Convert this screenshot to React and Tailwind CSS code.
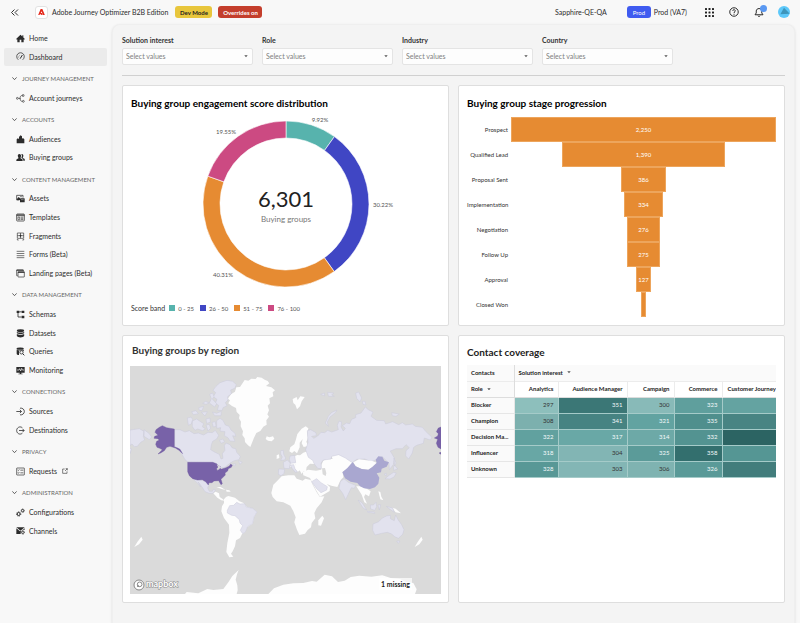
import React, { useState } from 'react'

const INK = '#2c2c2c'

// Sidebar icons, all on a 27 x 27 grid
const icons = {
  home: <path d="M13.5 2 1 14.500V16.500H4V25H11V17.500H16V25H23V16.500H26V14.500L22 10.500V4H19V7.500Z" fill={INK} />,
  dashboard: (
    <g fill="none" stroke={INK} strokeWidth="2.200" strokeLinecap="round">
      <path d="M6 22.500A11.500 11.500 0 1 1 21 22.500" />
      <path d="M13 19 18.500 10" strokeWidth="3" />
      <path d="M7 15H7.500M9.500 10 10 10.500" strokeWidth="1.500" />
    </g>
  ),
  journeys: (
    <g fill="none" stroke={INK} strokeWidth="1.900">
      <circle cx="4" cy="13" r="2.800" />
      <circle cx="12" cy="13" r="1.400" />
      <path d="M7 13H11M12.500 11C13 6 15 4.500 19 4.500M12.500 15C13 20 15 22 19 22" />
      <rect x="19" y="2" width="5" height="5" rx="1" />
      <circle cx="22" cy="22" r="2.800" />
    </g>
  ),
  audiences: (
    <path d="M9 25V6L13.500 1 18 4V25ZM2 25V13L5.500 10 9 12V25ZM18 25V11L21 9 25 13V25Z" fill={INK} />
  ),
  people: (
    <g fill={INK}>
      <path d="M10 3C14 3 15.500 6 15 9.500 14.700 12 13.500 13.500 13.500 15.500L19 18.500C20 19.500 20 22 20 24H1C1 21.500 1 19.500 2 18.500L7.500 15.500C7.500 13.500 6 12 5.500 9.500 5 6 6.500 3 10 3Z" />
      <path d="M17 3C21 2.500 22.500 6 22 9 21.500 12 20.500 13 20.500 15L25 17.500C26.500 18.500 26.500 21 26.500 23H22C22 20 21.500 18 20 17L16 14.500C18 11 18.500 6 16 3.500Z" />
    </g>
  ),
  assets: (
    <g>
      <path d="M2 4H21V11M2 4V18H10" fill="none" stroke={INK} strokeWidth="2.200" />
      <path d="M3 14 8 9 12 13V18H3Z" fill={INK} />
      <circle cx="15" cy="8" r="1.800" fill={INK} />
      <rect x="12" y="13" width="14" height="12" rx="1" fill={INK} />
      <path d="M15 17H23" stroke="#ddd" strokeWidth="1.400" />
    </g>
  ),
  templates: (
    <g fill="none" stroke={INK} strokeWidth="2.200">
      <rect x="2" y="3" width="23" height="21" rx="2" />
      <path d="M2 8H25M2 5.500H25" />
      <path d="M6 12H11V20H6ZM14 12.500H22M14 16H22M14 19.500H22" strokeWidth="1.800" />
    </g>
  ),
  fragments: (
    <g fill="none" stroke={INK} strokeWidth="1.900">
      <path d="M4 3H23V19H4ZM4 11H23M13.500 3V19" />
      <path d="M4 21V24H8M19 24H23V21" />
      <circle cx="13.500" cy="11" r="2" fill={INK} />
    </g>
  ),
  forms: <path d="M2 4H25M2 10.500H25M2 17H25M2 23H25" stroke={INK} strokeWidth="1.900" />,
  landing: (
    <g fill="none" stroke={INK} strokeWidth="2">
      <path d="M5 20H2V3H22V6" />
      <path d="M2 3.500H22" strokeWidth="3" />
      <rect x="6" y="8" width="19" height="16" rx="1" />
      <path d="M6 10H25" strokeWidth="3" />
    </g>
  ),
  schemas: (
    <g fill={INK}>
      <path d="M2 2H10V9H2ZM17 2H25V9H17ZM17 17H25V25H17Z" />
      <path d="M10 5.500H17M6 9V21H17" fill="none" stroke={INK} strokeWidth="2.500" />
    </g>
  ),
  datasets: (
    <g fill={INK}>
      <ellipse cx="13.500" cy="5" rx="11" ry="4" />
      <path d="M2.500 8C6 11.500 21 11.500 24.500 8V12C22 16 5 16 2.500 12ZM2.500 15C6 18 21 18 24.500 15V21C22 26.500 5 26.500 2.500 21Z" />
    </g>
  ),
  queries: (
    <g fill={INK}>
      <ellipse cx="12.500" cy="5" rx="11" ry="3.500" />
      <path d="M2 8C6 10.500 20 10.500 24 8V11H9V24C5 24 2 22 2 20Z" />
      <circle cx="16.500" cy="16" r="5" fill="#f8f8f8" stroke={INK} strokeWidth="2.500" />
      <path d="M20 20 25 25" stroke={INK} strokeWidth="3" />
    </g>
  ),
  monitoring: (
    <g>
      <path d="M1 3H26V20H16V23H20V25H7V23H11V20H1Z" fill={INK} />
      <path d="M3 12H9L11 8 14 15 17 7 19 12H24" fill="none" stroke="#fff" strokeWidth="1.900" />
    </g>
  ),
  sources: (
    <g fill="none" stroke={INK} strokeWidth="2.400">
      <path d="M12 3.500C20 2 25 8 25 13.500S20 25 12 23.500" />
      <path d="M1 13.500H16M11.500 8.500 16.500 13.500 11.500 18.500" />
    </g>
  ),
  destinations: (
    <g fill="none" stroke={INK} strokeWidth="2.400">
      <path d="M19 5C10 -1 2 6 2 13.500S10 28 19 22" />
      <path d="M9 13.500H24M19.500 8.500 24.500 13.500 19.500 18.500" />
    </g>
  ),
  requests: (
    <g fill="none" stroke={INK} strokeWidth="2">
      <rect x="2" y="3" width="23" height="21" rx="1" />
      <path d="M5 9 7 11 10 7M5 17 7 19 10 15M13 9.500H22M13 17.500H22" />
    </g>
  ),
  configurations: (
    <g fill="none" stroke={INK}>
      <circle cx="8" cy="18" r="4.500" strokeWidth="3" />
      <circle cx="8" cy="18" r="6.500" strokeWidth="2.500" strokeDasharray="2.600 2.500" />
      <circle cx="20" cy="8" r="3.500" strokeWidth="2.500" />
      <circle cx="20" cy="8" r="5" strokeWidth="2.500" strokeDasharray="2 1.930" />
    </g>
  ),
  channels: (
    <g>
      <path d="M1 4H26L13.500 14Z" fill={INK} />
      <path d="M1 7 12 16 15 15 26 7V12C20 10 13 14 14 24H1Z" fill={INK} />
      <circle cx="20.500" cy="19" r="3.500" fill="none" stroke={INK} strokeWidth="2.500" />
      <circle cx="20.500" cy="19" r="5.500" fill="none" stroke={INK} strokeWidth="2" strokeDasharray="2.200 2.120" />
    </g>
  ),
}

const navGroups = [
  { items: [{ label: 'Home', icon: 'home' }, { label: 'Dashboard', icon: 'dashboard', active: true }] },
  { title: 'JOURNEY MANAGEMENT', items: [{ label: 'Account journeys', icon: 'journeys' }] },
  { title: 'ACCOUNTS', items: [{ label: 'Audiences', icon: 'audiences' }, { label: 'Buying groups', icon: 'people' }] },
  {
    title: 'CONTENT MANAGEMENT',
    items: [
      { label: 'Assets', icon: 'assets' },
      { label: 'Templates', icon: 'templates' },
      { label: 'Fragments', icon: 'fragments' },
      { label: 'Forms (Beta)', icon: 'forms' },
      { label: 'Landing pages (Beta)', icon: 'landing' },
    ],
  },
  {
    title: 'DATA MANAGEMENT',
    items: [
      { label: 'Schemas', icon: 'schemas' },
      { label: 'Datasets', icon: 'datasets' },
      { label: 'Queries', icon: 'queries' },
      { label: 'Monitoring', icon: 'monitoring' },
    ],
  },
  { title: 'CONNECTIONS', items: [{ label: 'Sources', icon: 'sources' }, { label: 'Destinations', icon: 'destinations' }] },
  { title: 'PRIVACY', items: [{ label: 'Requests', icon: 'requests', external: true }] },
  { title: 'ADMINISTRATION', items: [{ label: 'Configurations', icon: 'configurations' }, { label: 'Channels', icon: 'channels' }] },
]

const filters = ['Solution interest', 'Role', 'Industry', 'Country']

const bands = [
  { label: '0 - 25', pct: 9.92, color: '#57b3ad', x: 144, y: 7 },
  { label: '26 - 50', pct: 30.22, color: '#4046c4', x: 207, y: 92 },
  { label: '51 - 75', pct: 40.31, color: '#e68b32', x: 47, y: 162 },
  { label: '76 - 100', pct: 19.55, color: '#cc4a82', x: 50, y: 19 },
]

const stages = [
  { label: 'Prospect', value: 2250 },
  { label: 'Qualified Lead', value: 1390 },
  { label: 'Proposal Sent', value: 386 },
  { label: 'Implementation', value: 334 },
  { label: 'Negotiation', value: 276 },
  { label: 'Follow Up', value: 275 },
  { label: 'Approval', value: 127 },
  { label: 'Closed Won', value: 42, hideValue: true },
]

const coverage = [
  { role: 'Blocker', cells: [['297', '#8dbfbc'], ['351', '#3b7776'], ['300', '#88bab8'], ['323', '#5f9f9d'], ['', '#64a3a1']] },
  { role: 'Champion', cells: [['308', '#7cb0ae'], ['341', '#468382'], ['321', '#62a3a1'], ['335', '#4f8f8d'], ['', '#488483']] },
  { role: 'Decision Ma...', cells: [['322', '#61a19f'], ['317', '#69a8a6'], ['314', '#6da9a7'], ['332', '#539391'], ['', '#2c6463']] },
  { role: 'Influencer', cells: [['318', '#68a7a5'], ['304', '#82b5b4'], ['325', '#5b9b99'], ['358', '#336f6e'], ['', '#559694']] },
  { role: 'Unknown', cells: [['328', '#589896'], ['303', '#83b6b5'], ['306', '#7fb3b1'], ['326', '#5a9a98'], ['', '#427d7c']] },
]

const Caret = ({ className }) => (
  <svg viewBox="0 0 6 4" className={className} aria-hidden="true">
    <path d="M0.500 0.500H5.500L3 3.500Z" fill="#555" />
  </svg>
)

const TopBar = () => (
  <header className="flex h-6 items-center pr-[10px] pl-[10px] text-[7px]">
    <button aria-label="Collapse menu" className="flex h-3 w-[9px] items-center">
      <svg viewBox="0 0 9 9" className="size-[9px]" fill="none" stroke="#333" strokeWidth="1">
        <path d="M4.500 1.500 1.500 4.500 4.500 7.500M8 1.500 5 4.500 8 7.500" />
      </svg>
    </button>
    <span className="ml-4 flex size-[13px] items-center justify-center rounded-[3px] border border-[#e2e2e2] bg-white">
      <svg viewBox="0 0 12 11" className="w-[7px]" fill="#e4281a">
        <path d="M4.500 0H7.500L12 11H9L6 3.800 4.700 7H6.900L8.100 11H5.800L5.200 9H3L2.500 11H0Z" />
      </svg>
    </span>
    <span className="ml-1 text-[#2c2c2c]">Adobe Journey Optimizer B2B Edition</span>
    <span className="ml-[7px] flex h-3 w-[37px] items-center justify-center rounded-[3px] bg-[#e8c63c] text-[6px] font-bold text-[#222]">Dev Mode</span>
    <span className="ml-[6px] flex h-3 w-11 items-center justify-center rounded-[3px] bg-[#c43e2c] text-[6px] font-bold text-white">Overrides on</span>
    <span className="ml-auto text-[#2c2c2c]">Sapphire-QE-QA</span>
    <span className="ml-5 flex h-3 w-6 items-center justify-center rounded-[3px] bg-[#3f5bf0] text-[6px] text-white">Prod</span>
    <span className="ml-[3px] text-[#2c2c2c]">Prod (VA7)</span>
    <button aria-label="Apps" className="ml-[18px]">
      <svg viewBox="0 0 9 9" className="size-[9px]" fill="#222">
        {[0, 3.500, 7].map((y) => [0, 3.500, 7].map((x) => <rect key={`${x}-${y}`} x={x} y={y} width="2" height="2" rx="0.500" />))}
      </svg>
    </button>
    <button aria-label="Help" className="ml-[15px]">
      <svg viewBox="0 0 20 20" className="size-[10px]" fill="none" stroke="#222" strokeWidth="1.900">
        <circle cx="10" cy="10" r="8.500" />
        <path d="M7.500 8C7.500 4.500 12.500 4.500 12.500 7.700 12.500 9.500 10 9.700 10 12M10 13.500V15.500" />
      </svg>
    </button>
    <button aria-label="Notifications" className="relative ml-[15px]">
      <svg viewBox="0 0 20 20" className="size-[10px]" fill="none" stroke="#222" strokeWidth="1.900">
        <path d="M2 15.500H18L15.500 12V8C15.500 1.500 4.500 1.500 4.500 8V12ZM8 17.500C8.500 19.500 11.500 19.500 12 17.500" />
      </svg>
      <span className="absolute -top-[2px] left-[6px] size-[7px] rounded-full bg-[#5a98f2]" />
    </button>
    <button aria-label="Account" className="ml-[14px]">
      <svg viewBox="0 0 36 36" className="size-3">
        <circle cx="18" cy="18" r="18" fill="#5cc8fa" />
        <path d="M18 5 31 19 35 23 20 24 7 25Z" fill="#3d95bb" />
      </svg>
    </button>
  </header>
)

// Items and headings share the column height 5 : 6
const Sidebar = () => (
  <nav className="mt-[5px] flex h-[511px] w-[112px] shrink-0 flex-col pr-[5px] pl-1 text-[7px] text-[#2c2c2c]">
    {navGroups.map((group) => (
      <React.Fragment key={group.title || 'top'}>
        {group.title && (
          <button className="flex flex-[6] items-center pl-2 text-[6px] text-[#666]">
            <svg viewBox="0 0 6 4" className="mt-[2px] mr-[5px] w-[5px]" fill="none" stroke="#444">
              <path d="M0.500 0.500 3 3.200 5.500 0.500" />
            </svg>
            <span className="pt-[2px]">{group.title}</span>
          </button>
        )}
        {group.items.map((item) => (
          <a
            key={item.label}
            href="#"
            className={`flex flex-[5] items-center rounded-[2px] pl-3 ${item.active ? 'bg-[#ebebeb]' : ''}`}
          >
            <svg viewBox="0 0 27 27" className="mr-1 size-[9px] shrink-0">{icons[item.icon]}</svg>
            {item.label}
            {item.external && (
              <svg viewBox="0 0 18 18" className="ml-[5px] size-[6px]" fill="none" stroke="#444" strokeWidth="2">
                <path d="M8 3H2V16H15V10M11 2H16V7M16 2 9 9" />
              </svg>
            )}
          </a>
        ))}
      </React.Fragment>
    ))}
  </nav>
)

const Filters = () => {
  const [values, setValues] = useState({})
  return (
    <div className="flex gap-[9px] border-b border-[#d0d0d0] pb-[10px]">
      {filters.map((name) => (
        <div key={name} className="w-[131px]">
          <label htmlFor={name} className="block h-3 text-[7px] leading-[8px] font-bold text-[#333]">{name}</label>
          <div className="relative">
            <select
              id={name}
              value={values[name] || ''}
              onChange={(e) => setValues({ ...values, [name]: e.target.value })}
              className="block h-[17px] w-full appearance-none rounded-[2px] border border-[#e4e4e4] bg-[#fdfdfd] px-[3px] text-[7px] text-[#808080]"
            >
              <option value="">Select values</option>
            </select>
            <Caret className="pointer-events-none absolute top-[7px] right-[5px] w-1" />
          </div>
        </div>
      ))}
    </div>
  )
}

const Card = ({ title, titleClass, className, children }) => (
  <section className={`rounded-[2px] border border-[#dedede] bg-white ${className}`}>
    <h2 className={`text-[10px] leading-[14px] font-bold ${titleClass}`}>{title}</h2>
    {children}
  </section>
)

const point = (pct, r) => {
  const a = (pct / 100) * 2 * Math.PI
  return `${110 + r * Math.sin(a)} ${91 - r * Math.cos(a)}`
}

const Donut = () => {
  let start = 0
  return (
    <svg viewBox="0 0 220 176" className="mx-auto block w-[220px]">
      {bands.map((b) => {
        const from = start
        const to = start + b.pct
        start = to
        return (
          <g key={b.label}>
            <path
              d={`M${point(from, 83)}A83 83 0 0 1 ${point(to, 83)}L${point(to, 66)}A66 66 0 0 0 ${point(from, 66)}Z`}
              fill={b.color}
              stroke="#fff"
              strokeWidth="0.600"
            />
            <text x={b.x} y={b.y + 2} textAnchor="middle" fontSize="6" fill="#555">{b.pct}%</text>
          </g>
        )
      })}
      <text x="110" y="94" textAnchor="middle" fontSize="22" fill="#222">6,301</text>
      <text x="110" y="109" textAnchor="middle" fontSize="8" fill="#777">Buying groups</text>
    </svg>
  )
}

const Funnel = () => (
  <div className="mt-[7px] flex flex-col">
    {stages.map((s) => (
      <div key={s.label} className="flex h-[25px] items-center">
        <span className="w-[41px] shrink-0 text-right text-[6px] whitespace-nowrap text-[#333]">{s.label}</span>
        <div className="ml-[3px] flex h-full flex-1 justify-center">
          <div
            className="flex items-center justify-center border border-[#eda55c] bg-[#e68b32] text-[6px] text-white"
            style={{ width: `${(s.value / 2250) * 100}%` }}
          >
            {!s.hideValue && s.value.toLocaleString('en-US')}
          </div>
        </div>
      </div>
    ))}
  </div>
)

const WorldMap = () => (
  <svg viewBox="30 99 933 684" className="block w-full bg-[#dadada]" role="img" aria-label="World map of buying groups">
    <g fill="#fdfdfd" strokeLinejoin="round">
      {/* Greenland, Iceland, Svalbard */}
      <path d="M368 150 374 141 385 143 394 137 407 138 412 132 425 134 434 140 443 144 448 151 438 159 454 163 465 172 458 178 460 190 448 196 450 211 443 218 447 232 442 244 447 251 439 262 440 275 430 281 421 294 409 300 402 314 397 327 391 342 384 337 375 327 374 316 367 306 369 295 362 280 363 266 357 256 359 246 350 237 348 225 336 219 325 211 330 202 323 197 334 183 345 176 349 163 360 162Z" />
      <path d="M440 310 448 313 459 310 463 317 455 325 444 323 437 318Z" />
      <path d="M518 198 530 192 533 202 541 190 554 192 545 205 540 220 531 229 526 215 520 210Z" />
      {/* Central and South America */}
      <path d="M280 481 287 476 297 481 299 492 308 498 314 503 304 502 292 494ZM289 462 302 462 317 471 305 468ZM318 470 328 472 332 476 320 476Z" />
      <path d="M312 499 318 492 325 489 345 494 358 505 371 510 380 521 398 527 411 537 402 552 398 572 382 582 375 598 366 603 360 615 348 622 345 640 338 655 333 662 340 671 328 673 319 657 322 630 328 600 327 575 312 555 304 535 306 520 312 510Z" />
      {/* Africa, Madagascar */}
      <path d="M485 430 505 427 523 427 530 437 548 443 556 437 572 441 578 455 590 478 599 491 613 490 605 508 590 526 583 540 586 556 575 570 573 583 563 591 555 602 538 606 531 590 523 568 527 553 520 535 511 518 490 508 470 505 458 492 454 480 460 455 475 440Z" />
      <path d="M607 548 612 556 603 578 595 577 595 562Z" />
      {/* Scandinavia, eastern Europe, Middle East, central Asia */}
      <g transform="translate(420 171)">
        <path d="M88 184 91 172 103 163 108 148 112 132 125 116 137 109 145 115 142 128 144 143 139 155 145 168 131 171 125 160 128 147 119 158 119 172 111 190 103 183 96 189ZM50 196 57 193 58 204 50 207Z" />
        <path d="M104 199 112 195 120 196 130 188 142 184 149 198 162 208 165 222 150 221 140 231 138 243 130 244 125 252 118 239 107 229ZM91 220 106 216 106 226 120 240 113 246 100 230 90 230Z" />
        <path d="M128 245 145 239 168 242 184 239 184 225 190 212 200 206 218 207 214 198 232 193 250 197 268 205 281 215 262 237 248 245 250 262 242 270 232 291 214 287 200 282 210 291 209 303 180 320 168 300 156 277 150 264 130 256Z" />
        <path d="M186 235 195 234 199 250 197 258 188 253ZM141 233 160 226 170 239 152 237Z" fill="#dadada" />
      </g>
      {/* South-east Asia and New Zealand */}
      <path d="M709 460 723 460 740 467 752 475 747 490 736 484 732 492 741 512 733 508 725 485ZM775 475 781 477 784 491 790 502 781 499Z" />
      <path d="M904 611 908 620 898 634 884 642 893 627ZM64 611 68 620 57 634 43 642 52 627Z" />
      <path d="M816 524 827 527 843 541 827 538Z" />
      {/* Antarctica */}
      <path d="M195 783 200 777 235 781 262 768 280 771 310 768 325 748 337 729 356 711 351 724 347 740 352 757 353 772 350 783Z" />
      <path d="M445 783 462 766 490 755 520 751 550 750 576 744 590 746 614 725 636 730 654 747 674 743 692 732 718 728 754 731 787 727 812 735 840 738 855 746 880 750 890 769 885 783Z" />
    </g>
    <g fill="#e2e2ee" stroke="#cbcbda" strokeWidth="1.500" strokeLinejoin="round">
      {/* Canada and its arctic islands */}
      <path d="M164 290 180 290 195 297 208 293 222 302 235 300 251 306 264 298 277 299 286 292 296 307 290 318 278 325 274 335 272 350 285 358 298 364 303 378 309 376 307 362 315 352 313 338 318 330 330 335 337 345 347 347 350 358 361 370 357 380 343 383 329 391 315 403 300 405 290 395 280 388 204 387 195 380 185 362 178 350 164 342Z" />
      <path d="M288 160 300 149 321 142 338 145 349 155 344 166 332 171 334 182 323 191 324 201 316 209 321 218 309 224 307 232 292 232 296 217 286 211 291 199 280 191 287 179 279 172Z" />
      <path d="M269 184 278 180 282 191 277 198 290 212 284 222 268 210 274 197ZM277 237 290 241 304 235 303 248 284 248ZM215 236 228 233 235 242 220 245ZM236 224 251 220 246 233 238 232ZM244 238 262 236 255 249ZM248 211 257 205 267 210 258 214ZM202 255 213 252 218 259 214 273 205 277ZM217 264 230 258 243 267 251 272 247 281 256 287 248 293 233 288 225 292 217 281ZM258 258 270 255 271 268 260 271ZM355 383 367 387 360 394ZM337 393 348 393 344 399Z" />
      <path d="M258 276 268 274 272 286 264 294ZM276 268 286 266 288 280 280 282ZM298 322 308 318 314 326 304 331Z" />
      <path d="M290 263 300 256 309 262 316 276 327 280 333 291 345 301 347 310 338 308 345 325 330 324 324 314 313 308 315 296 300 294 302 284 290 286Z" />
      {/* Mexico, Brazil */}
      <path d="M220 438 232 441 245 442 258 447 266 457 263 465 268 475 277 475 280 469 287 471 279 481 268 481 255 476 248 465 238 451 234 447 242 462 232 450Z" />
      <path d="M329 518 341 517 350 508 360 513 374 512 379 522 398 526 411 537 402 552 398 572 383 580 376 597 368 602 361 592 368 578 360 570 358 560 345 548 335 547 322 540 322 532Z" />
      {/* Western Europe and Saudi Arabia */}
      <g transform="translate(420 171)">
        <path d="M62 182 70 181 71 193 77 204 74 210 62 211 67 201 62 192ZM70 217 82 210 91 219 88 236 72 235ZM56 237 74 238 72 251 63 257 55 253ZM90 198 104 196 107 218 92 220 88 208ZM91 225 101 224 105 236 112 246 106 247 96 235Z" />
        <path d="M155 275 170 266 183 278 202 290 200 300 183 308 170 296Z" />
      </g>
      {/* Russia */}
      <g transform="translate(495 0)">
        <path d="M67 293 77 290 93 299 94 308 80 310 86 316 98 309 108 298 119 299 128 292 140 297 160 290 157 277 162 264 170 267 168 282 175 294 181 286 172 278 184 270 194 272 200 259 212 254 212 245 228 240 241 222 250 230 264 237 258 250 275 262 298 263 302 273 323 266 341 275 352 269 362 276 382 273 391 280 412 283 422 295 441 313 436 321 418 315 415 331 395 337 386 343 382 360 371 378 362 369 363 353 373 344 363 335 352 347 333 347 316 354 328 375 325 395 313 410 312 391 292 371 279 378 259 386 239 378 215 379 202 389 181 375 161 365 140 370 138 378 115 381 108 390 109 407 98 406 88 393 83 382 70 373 62 350 69 329Z" />
        <path d="M156 231 139 239 130 250 121 270 130 280 127 267 135 252 151 239ZM212 180 221 177 230 195 225 207 215 196ZM232 205 240 205 243 216 234 214ZM320 239 343 243 333 250 322 248ZM107 184 118 180 119 189ZM128 178 146 180 140 186 148 190 130 190Z" />
        {/* India, Indonesia, Japan, Australia */}
        <path d="M162 466 166 446 177 437 190 448 212 457 208 466 199 464 189 485 182 500 173 481Z" />
        <path d="M219 501 232 510 245 531 234 525ZM256 516 265 516 273 508 275 521 269 532 257 528ZM247 535 268 537 270 541 248 538ZM279 516 287 515 283 531ZM304 520 323 525 328 538 315 529ZM300 437 312 427 326 418 334 420 327 432 315 438ZM325 400 330 398 338 408 326 412ZM327 375 333 390 329 399ZM297 424 304 421 304 429Z" />
        <path d="M264 573 281 566 291 556 304 549 317 547 316 557 328 563 332 546 339 560 350 575 357 590 353 604 340 616 329 611 320 603 307 598 290 601 270 606 263 592ZM335 624 345 624 340 631Z" />
      </g>
      <path d="M30 291 45 289 58 287 72 295 70 310 74 321 62 328 52 340 43 341 36 333 30 337ZM72 290 87 301 95 312 88 320 72 310ZM28 345 35 348 30 362Z" />
    </g>
    <path d="M700 388 717 379 739 382 757 384 770 389 757 402 745 410 725 408 707 400Z" fill="#fdfdfd" />
    <path d="M667 418 682 405 698 387 707 400 725 408 745 410 757 402 770 390 767 380 775 370 787 371 793 383 807 388 800 401 785 407 783 418 770 421 778 434 775 452 765 463 750 468 732 466 720 460 712 450 692 446 675 436Z" fill="#a9a7d0" />
    {/* United States */}
    <g fill="#7862a8" stroke="#6b569b" strokeWidth="1">
      <path d="M163 288V341L173 345 180 349 188 362 177 352 166 345 150 340 140 343 133 353 122 360 114 363 127 350 119 346 111 343 107 334 110 325 118 321 113 317 102 316 104 310 114 307 105 298 108 290 118 283 127 278 140 284Z" />
      <path d="M203 388H278L290 392 296 399 302 401 290 405 291 414 298 402 303 409 318 404 328 399 332 393 337 397 334 403 325 407 323 414 315 420 316 426 303 439 307 452 303 455 296 443 282 444 276 449 267 449 265 456 257 446 247 440 232 441 218 437 208 428 203 416Z" />
      <path d="M963 282 955 285 949 296 955 302 953 309 943 315 953 319 949 331 954 343 963 348ZM957 360 963 358V364Z" />
    </g>
    <path d="M290 394 302 401 298 409 292 412 294 402Z" fill="#dadada" />
    <g>
      <circle cx="57" cy="756" r="15" fill="#fff" stroke="#888" strokeWidth="3" />
      <circle cx="59" cy="754" r="7" fill="#fff" stroke="#888" strokeWidth="3" />
      <path d="M51 762 53 754 59 761Z" fill="#888" />
      <text x="78" y="763" fontSize="27" fontWeight="700" fill="#fff" stroke="#888" strokeWidth="3" paintOrder="stroke">mapbox</text>
    </g>
  </svg>
)

const CoverageTable = () => (
  <div className="mt-[6px] overflow-hidden">
    <table className="w-full table-fixed border-collapse text-[6px] leading-[8px]">
      <colgroup>
        <col className="w-[47px]" />
        <col className="w-[44px]" />
        <col className="w-[69px]" />
        <col className="w-[47px]" />
        <col className="w-[48px]" />
        <col />
      </colgroup>
      <thead className="text-[#222]">
        <tr className="h-4 border-b border-[#ececec] bg-[#fafafa]">
          <th className="border-r border-[#ddd] pl-1 text-left">Contacts</th>
          <th colSpan="5" className="pl-1 text-left">
            <button className="flex items-center gap-1 font-bold">Solution interest <Caret className="w-1" /></button>
          </th>
        </tr>
        <tr className="h-4 border-b border-[#ddd]">
          <th className="border-r border-[#ddd] bg-[#fafafa] pl-1 text-left">
            <button className="flex items-center gap-1 font-bold">Role <Caret className="w-1" /></button>
          </th>
          {['Analytics', 'Audience Manager', 'Campaign', 'Commerce'].map((h) => (
            <th key={h} className="border-r border-[#ececec] pr-1 text-right whitespace-nowrap">{h}</th>
          ))}
          <th className="pl-[5px] text-left whitespace-nowrap">Customer Journey</th>
        </tr>
      </thead>
      <tbody>
        {coverage.map((row) => (
          <tr key={row.role} className="h-4">
            <th className="border-r border-b border-[#e6e6e6] bg-[#fafafa] pl-1 text-left whitespace-nowrap text-[#222]">{row.role}</th>
            {row.cells.map(([value, color], i) => (
              <td
                key={i}
                className={`border-r border-b border-[#a5cbc9] pr-1 text-right last:border-r-0 ${Number(value) < 310 ? 'text-[#333]' : 'text-[#f4fafa]'}`}
                style={{ backgroundColor: color }}
              >
                {value}
              </td>
            ))}
          </tr>
        ))}
      </tbody>
    </table>
  </div>
)

const App = () => {
  return (
    <div className="min-h-screen bg-[#f8f8f8] font-[Lato,sans-serif]">
      <TopBar />
      <div className="flex">
        <Sidebar />
        <main className="mr-[5px] min-h-[599px] min-w-0 flex-1 rounded-t-lg border border-b-0 border-[#efefef] bg-[#f4f4f4] px-[9px] pt-[11px] shadow-sm">
          <Filters />
          <div className="mt-[9px] grid grid-cols-2 gap-[9px]">
            <Card title="Buying group engagement score distribution" titleClass="text-black" className="h-[241px] px-2 pt-[10px]">
              <div className="mt-[3px]">
                <Donut />
              </div>
              <div className="mt-[14px] flex items-center text-[6px] text-[#555]">
                <span className="mr-1 text-[7px] text-[#333]">Score band</span>
                {bands.map((b) => (
                  <span key={b.label} className="mr-[6px] flex items-center gap-[3px]">
                    <span className="size-[6px]" style={{ backgroundColor: b.color }} />
                    {b.label}
                  </span>
                ))}
              </div>
            </Card>
            <Card title="Buying group stage progression" titleClass="text-black" className="h-[241px] px-2 pt-[10px]">
              <Funnel />
            </Card>
            <Card title="Buying groups by region" titleClass="pl-[2px] text-[#333]" className="px-[7px] pt-[7px] pb-2">
              <div className="relative mt-[9px]">
                <WorldMap />
                <span className="absolute right-[29px] bottom-1 bg-white/70 px-[2px] text-[7px] leading-[12px] font-bold text-[#222]">1 missing</span>
              </div>
            </Card>
            <Card title="Contact coverage" titleClass="text-[#222]" className="px-2 pt-[9px]">
              <CoverageTable />
            </Card>
          </div>
        </main>
      </div>
    </div>
  )
}

export default App
